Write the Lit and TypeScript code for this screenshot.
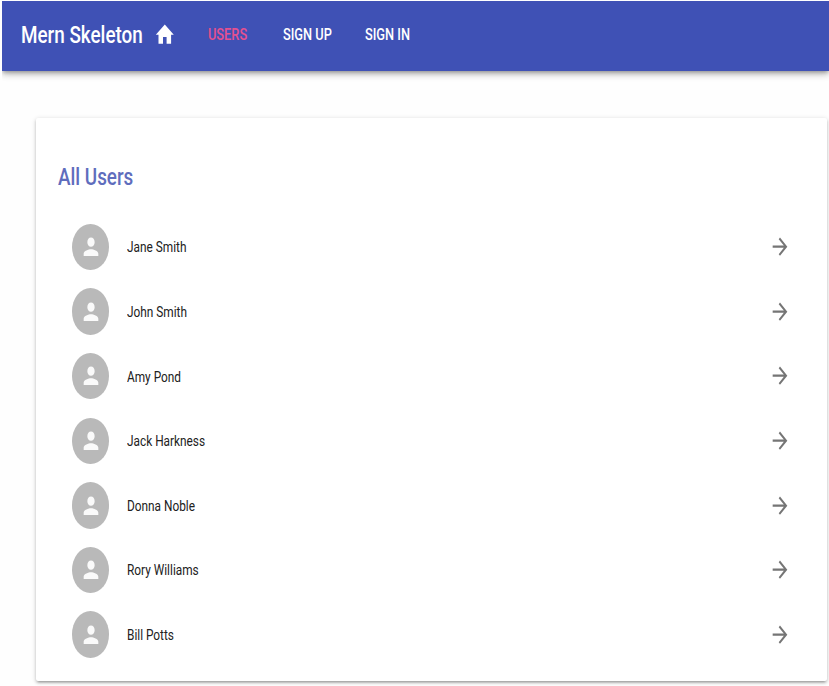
import { LitElement, html, css, svg } from "lit";
import { customElement } from "lit/decorators.js";

const NAMES = ["Jane Smith", "John Smith", "Amy Pond", "Jack Harkness", "Donna Noble", "Rory Williams", "Bill Potts"];

const icon = (cls: string, d: string) => html`
  <svg class=${cls} viewBox="0 0 24 24" preserveAspectRatio="none" aria-hidden="true">${svg`<path d=${d}></path>`}</svg>
`;

const HOME = "M10 20v-6h4v6h5v-8h3L12 3 2 12h3v8z";
const PERSON = "M12 12c2.21 0 4-1.79 4-4s-1.79-4-4-4-4 1.79-4 4 1.79 4 4 4zm0 2c-2.67 0-8 1.34-8 4v2h16v-2c0-2.66-5.33-4-8-4z";
const ARROW = "M12 4l-1.41 1.41L16.17 11H4v2h12.17l-5.58 5.59L12 20l8-8z";

@customElement("app-root")
export class AppRoot extends LitElement {
  static styles = css`
    :host {
      display: block;
      box-sizing: border-box;
      height: 686px;
      padding: 1px 0 0 2px;
      overflow: hidden;
      background: #fefefe;
      font-family: Roboto, "Liberation Sans", sans-serif;
    }
    .bar {
      display: flex;
      align-items: center;
      box-sizing: border-box;
      height: 70px;
      padding: 0 0 3px 18.5px;
      background: #3f51b5;
      color: #fff;
      box-shadow: 0 2px 4px -1px rgba(0, 0, 0, 0.3), 0 4px 6px rgba(0, 0, 0, 0.16), 0 1px 11px rgba(0, 0, 0, 0.1);
      clip-path: inset(0 0 -20px 0);
    }
    .text {
      display: block;
      white-space: nowrap;
      transform: scaleX(0.79);
      transform-origin: 0 50%;
    }
    .brand {
      width: 133.5px;
      font-size: 23.2px;
      font-weight: 500;
    }
    .brand .text,
    h1 .text {
      transform: scaleX(0.813);
    }
    .home {
      width: 21.6px;
      height: 27.4px;
      margin-right: 32.4px;
      fill: #fff;
    }
    .link {
      width: 75px;
      font-size: 16.2px;
      font-weight: 500;
    }
    .link.wide {
      width: 82px;
    }
    .link.active {
      color: #e6508f;
    }
    .card {
      box-sizing: border-box;
      width: 791px;
      height: 563.5px;
      margin: 46.5px 0 0 34px;
      padding: 45px 36px 0;
      border-radius: 2px;
      background: #fff;
      box-shadow: 0 1px 5px rgba(0, 0, 0, 0.16), 0 2px 3px rgba(0, 0, 0, 0.16), 0 3px 2px -2px rgba(0, 0, 0, 0.2);
    }
    h1 {
      margin: 0 0 0 -14.5px;
      height: 28px;
      line-height: 28px;
      font-size: 23.2px;
      font-weight: 500;
      color: #5f6dbd;
    }
    ul {
      margin: 24.2px 0 0;
      padding: 0;
      list-style: none;
    }
    li {
      display: flex;
      align-items: center;
      height: 64.6px;
    }
    .avatar {
      display: flex;
      align-items: center;
      justify-content: center;
      width: 37px;
      height: 46.4px;
      margin-right: 18px;
      border-radius: 50%;
      background: #b9b9b9;
    }
    .person {
      width: 22px;
      height: 27.7px;
      fill: #fafafa;
    }
    .name {
      flex: 1;
      padding-top: 1px;
      font-size: 15.1px;
      color: #212121;
    }
    .name .text {
      transform: scaleX(0.785);
    }
    .arrow {
      width: 22px;
      height: 27.4px;
      fill: #757575;
    }
  `;

  render() {
    return html`
      <header class="bar">
        <div class="brand"><span class="text">Mern Skeleton</span></div>
        ${icon("home", HOME)}
        <div class="link active"><span class="text">USERS</span></div>
        <div class="link wide"><span class="text">SIGN UP</span></div>
        <div class="link"><span class="text">SIGN IN</span></div>
      </header>
      <main class="card">
        <h1><span class="text">All Users</span></h1>
        <ul>
          ${NAMES.map(
            (name) => html`
              <li>
                <div class="avatar">${icon("person", PERSON)}</div>
                <div class="name"><span class="text">${name}</span></div>
                ${icon("arrow", ARROW)}
              </li>
            `
          )}
        </ul>
      </main>
    `;
  }
}
